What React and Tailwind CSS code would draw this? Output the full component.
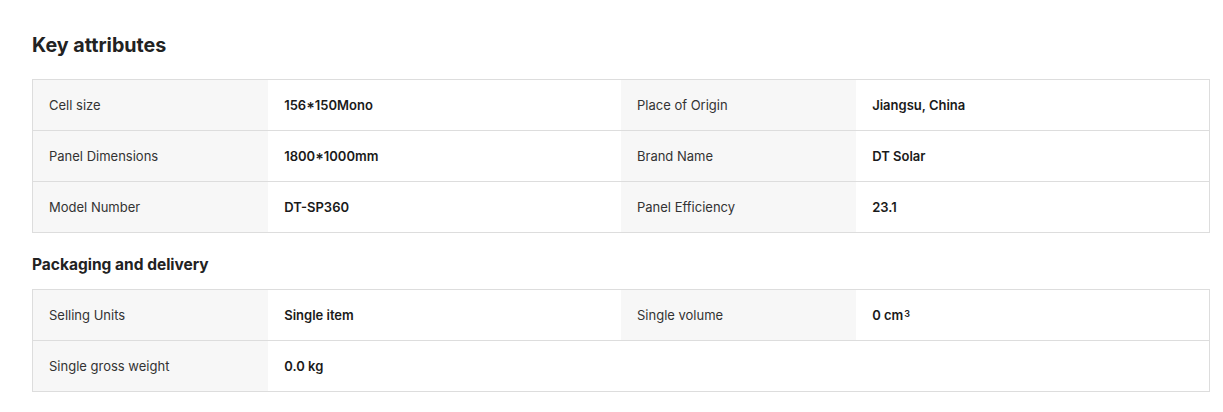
const keyAttrs = [
  ["Cell size", "156*150Mono", "Place of Origin", "Jiangsu, China"],
  ["Panel Dimensions", "1800*1000mm", "Brand Name", "DT Solar"],
  ["Model Number", "DT-SP360", "Panel Efficiency", "23.1"],
]

const packaging = [
  ["Selling Units", "Single item", "Single volume", <>0 cm<sup className="text-[9px] relative -top-[2px] ml-[1px]">3</sup></>],
  ["Single gross weight", "0.0 kg", null, null],
]

function AttrTable({ rows }) {
  return (
    <div className="border border-[#dddddd]">
      {rows.map((row, i) => (
        <div key={i} className={"grid grid-cols-[20%_30%_20%_30%] box-content h-[50px] " + (i < rows.length - 1 ? "border-b border-[#dddddd]" : "")}>
          <div className="bg-[#f7f7f7] flex items-center pl-4 pt-[2px] text-[13px] text-[#333333]">{row[0]}</div>
          <div className="flex items-center pl-4 pt-[2px] text-[13px] font-semibold text-[#1a1a1a]">{row[1]}</div>
          <div className={(row[2] ? "bg-[#f7f7f7] " : "") + "flex items-center pl-4 pt-[2px] text-[13px] text-[#333333]"}>{row[2]}</div>
          <div className="flex items-center pl-4 pt-[2px] text-[13px] font-semibold text-[#1a1a1a]">{row[3]}</div>
        </div>
      ))}
    </div>
  )
}

export default function App() {
  return (
    <div className="bg-white w-[1223px] h-[412px] pl-8 pr-[13px] pt-[31px]" style={{ fontFamily: "Inter, 'Noto Sans', sans-serif" }}>
      <h2 className="text-[19.7px] leading-[28px] font-bold text-[#222222] mb-5">Key attributes</h2>
      <AttrTable rows={keyAttrs} />
      <h3 className="text-[15.5px] leading-[24px] font-bold text-[#222222] mt-5 mb-3">Packaging and delivery</h3>
      <AttrTable rows={packaging} />
    </div>
  )
}
